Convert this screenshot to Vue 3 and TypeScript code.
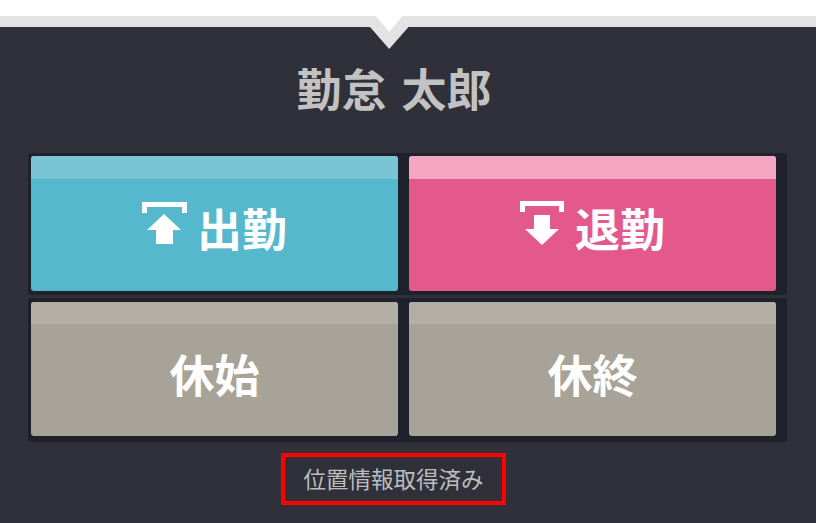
<script setup lang="ts">
const rows = [
  [
    { label: '出勤', tone: 'in', icon: 'up' },
    { label: '退勤', tone: 'out', icon: 'down' },
  ],
  [
    { label: '休始', tone: 'rest', icon: '' },
    { label: '休終', tone: 'rest', icon: '' },
  ],
]
</script>

<template>
  <div class="page">
    <div class="top">
      <div class="strip"></div>
      <svg class="notch" width="40" height="34" viewBox="0 0 40 34" aria-hidden="true">
        <path d="M0 11 H38.500 L19.200 33 Z" fill="#e3e3e3" />
        <path d="M5.700 0 H32.500 L19.200 16 Z" fill="#fff" />
      </svg>
    </div>
    <h1 class="name">勤怠 太郎</h1>
    <div class="grid">
      <div v-for="(row, i) in rows" :key="i" class="row" :class="'row' + i">
        <button v-for="b in row" :key="b.label" class="btn" :class="b.tone">
          <span class="cap"></span>
          <span class="face">
            <svg v-if="b.icon === 'up'" class="ico ico-up" width="45" height="43" viewBox="0 0 45 43" aria-hidden="true">
              <path d="M0 0 H45 V11 H40 V5 H5 V11 H0 Z" fill="#fff" />
              <path d="M22 12 L39 28 H31 V42 H14 V28 H5 Z" fill="#fff" />
            </svg>
            <svg v-if="b.icon === 'down'" class="ico ico-down" width="44" height="44" viewBox="0 0 44 44" aria-hidden="true">
              <path d="M0 0 H44 V11 H39 V5 H5 V11 H0 Z" fill="#fff" />
              <path d="M14 14 H30 V28 H39 L22 44 L5 28 H14 Z" fill="#fff" />
            </svg>
            <span class="label">{{ b.label }}</span>
          </span>
        </button>
      </div>
    </div>
    <div class="status-wrap">
      <div class="status">位置情報取得済み</div>
    </div>
  </div>
</template>

<style>
html, body { margin: 0; background: #2f3039; }
</style>

<style scoped>
.page {
  width: 816px;
  height: 523px;
  overflow: hidden;
  background: #2f3039;
  font-family: "Noto Sans CJK JP", "Liberation Sans", sans-serif;
  display: flex;
  flex-direction: column;
}
.top {
  height: 27px;
  background: #fff;
  position: relative;
  display: flex;
  flex-direction: column;
  justify-content: flex-end;
}
.strip { height: 11px; background: #e3e3e3; }
.notch { position: absolute; left: 370px; top: 16px; }
.name {
  margin: 0;
  height: 126px;
  box-sizing: border-box;
  padding: 31px 28px 0 0;
  text-align: center;
  font-size: 45px;
  line-height: 60px;
  font-weight: 700;
  color: #c2c2c2;
  word-spacing: 5px;
}
.grid {
  margin-left: 28px;
  width: 759px;
  display: flex;
  flex-direction: column;
  gap: 3px;
}
.row {
  display: flex;
  gap: 11px;
  background: #1f212c;
  border-radius: 3px;
  padding: 3px 11px 4px 3px;
}
.row1 { padding-top: 4px; padding-bottom: 6px; }
.btn {
  flex: 1 1 0;
  height: 135px;
  padding: 0;
  border: 0;
  border-radius: 3px;
  overflow: hidden;
  display: flex;
  flex-direction: column;
  font: inherit;
  color: #fff;
}
.row1 .btn { height: 134px; }
.cap { height: 23px; flex: none; }
.row1 .cap { height: 22px; }
.face {
  flex: 1;
  display: flex;
  align-items: center;
  justify-content: center;
  gap: 10px;
}
.ico-down { margin-right: 1px; }
.label {
  font-size: 45px;
  line-height: 60px;
  font-weight: 700;
  position: relative;
  top: -7px;
}
.row1 .label { top: -6px; }
.in { background: #56b8cd; }
.in .cap { background: #79c5d6; }
.out { background: #e3598c; }
.out .cap { background: #f4a5c0; }
.rest { background: #a7a398; }
.rest .cap { background: #b3afa4; }
.ico { position: relative; top: -12px; flex: none; }
.status-wrap {
  display: flex;
  justify-content: center;
  padding-top: 11px;
}
.status {
  box-sizing: border-box;
  width: 225px;
  height: 52px;
  margin-left: -29px;
  border: 4px solid #ff0000;
  text-align: center;
  font-size: 22.500px;
  line-height: 42px;
  font-weight: 400;
  color: #bdbdbd;
}
</style>
